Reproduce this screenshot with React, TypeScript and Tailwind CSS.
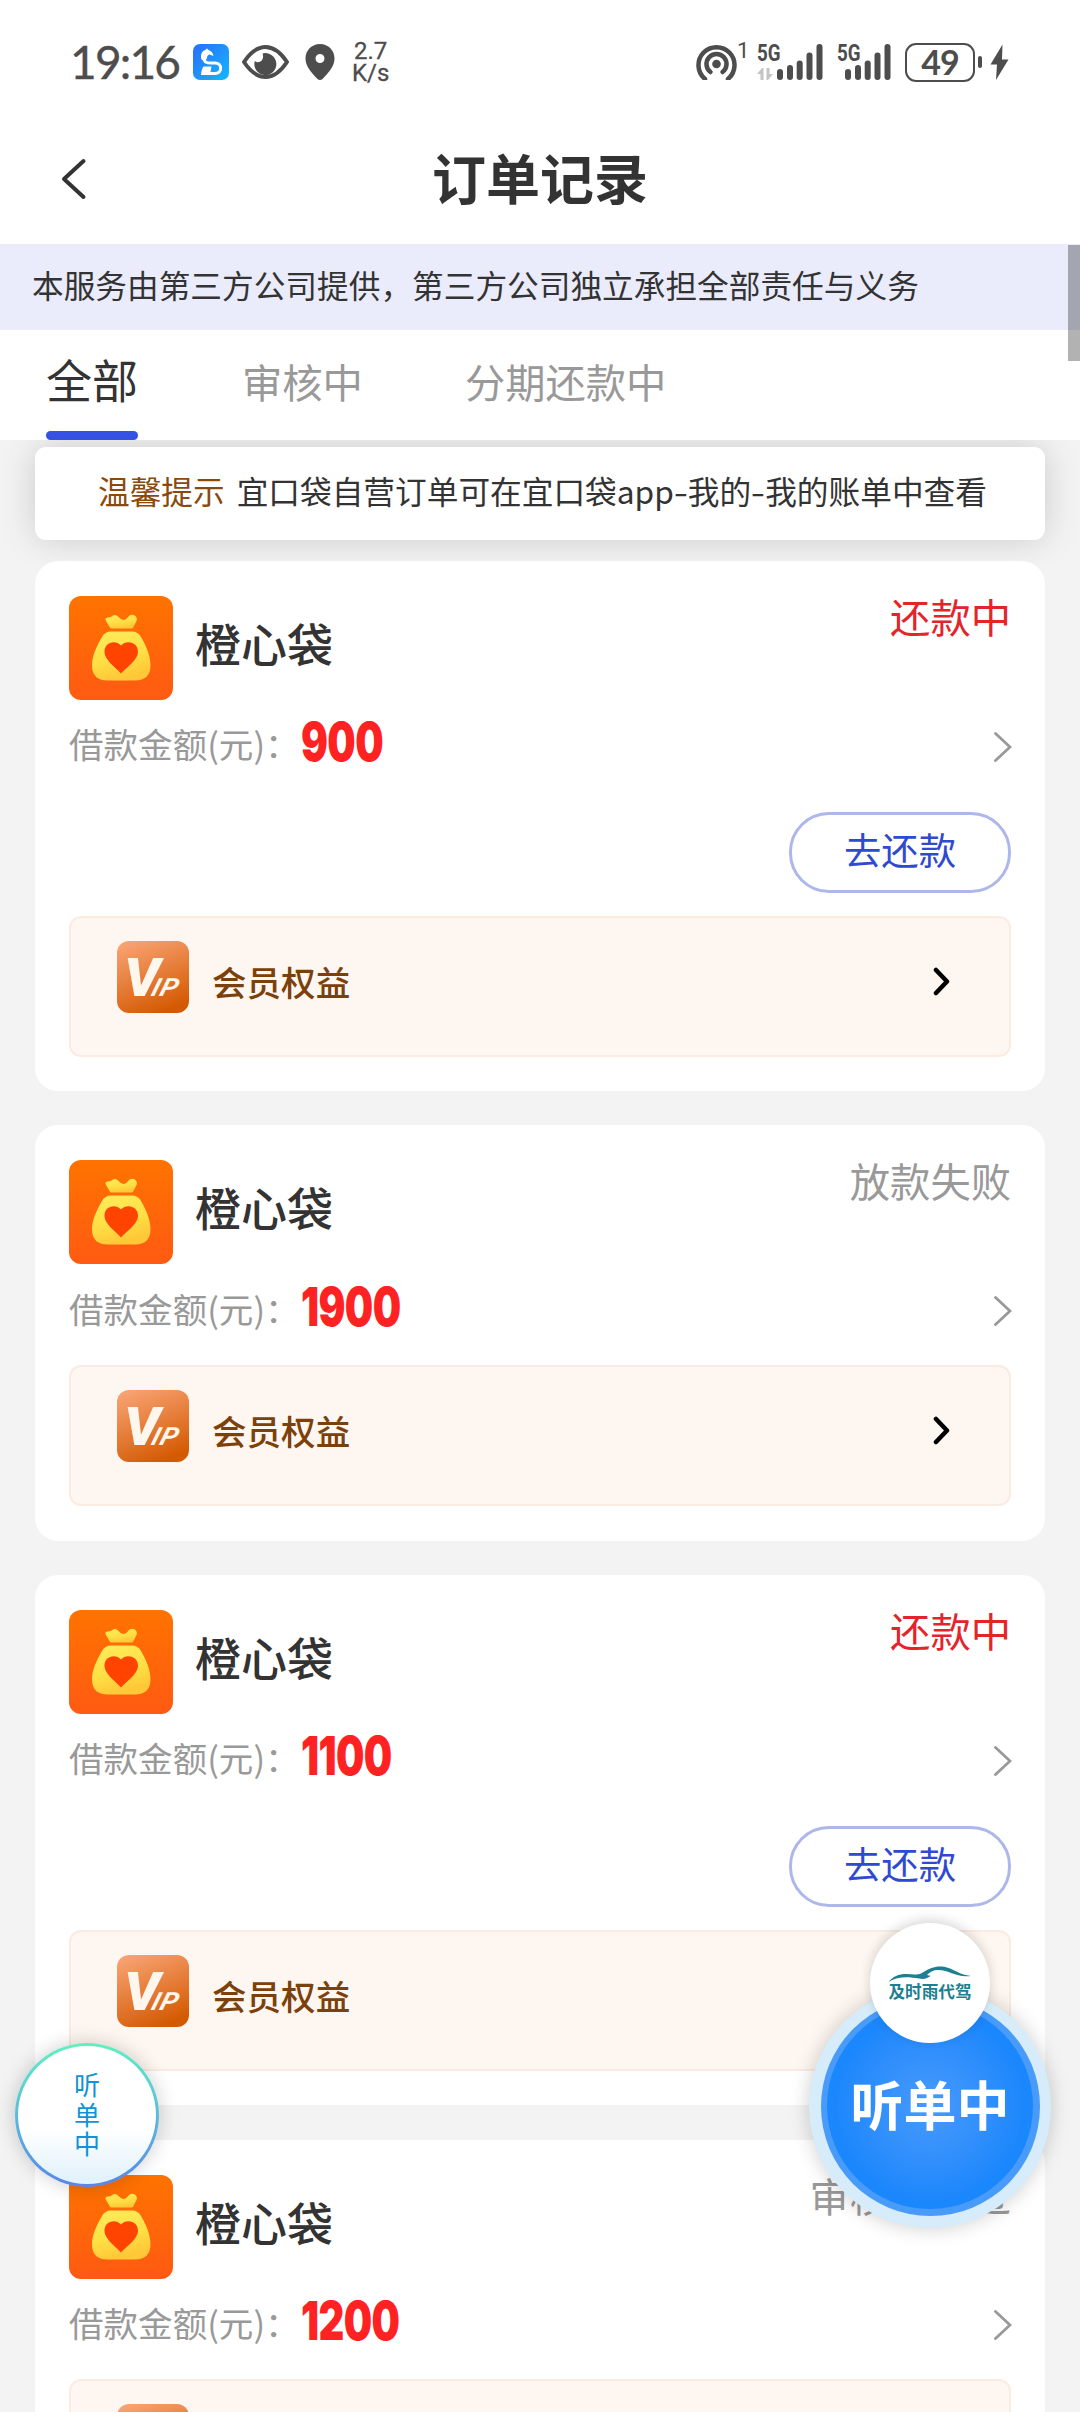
import { FunctionComponent } from "react";

type OrderType = {
  name: string;
  amount: string;
  status: string;
  repaying?: boolean;
};

const orders: OrderType[] = [
  { name: "橙心袋", amount: "900", status: "还款中", repaying: true },
  { name: "橙心袋", amount: "1900", status: "放款失败" },
  { name: "橙心袋", amount: "1100", status: "还款中", repaying: true },
  { name: "橙心袋", amount: "1200", status: "审核未通过" },
];

const Signal = ({ className = "" }: { className?: string }) => (
  <svg className={className} width="46" height="36" viewBox="0 0 46 36" fill="#4d4d4d">
    <rect x="0" y="25" width="6" height="11" rx="3" />
    <rect x="10" y="21" width="6" height="15" rx="3" />
    <rect x="19.7" y="16.5" width="6" height="19.5" rx="3" />
    <rect x="29.5" y="8.5" width="6" height="27.5" rx="3" />
    <rect x="39.5" y="0" width="6" height="36" rx="3" />
  </svg>
);

const StatusBar = () => (
  <div className="h-[124px] shrink-0 flex justify-between pl-[70px] pr-[71px] pt-[42px] text-[#4d4d4d]">
    <div className="flex h-10 items-center">
      <span className="w-[123px] font-['Lato'] text-[46px] leading-10 tracking-[-1.8px] whitespace-nowrap [-webkit-text-stroke:0.4px_#4d4d4d]">19:16</span>
      <svg width="36" height="36" viewBox="0 0 36 36">
        <defs>
          <linearGradient id="app" x1="0" y1="0" x2="1" y2="1">
            <stop offset="0" stopColor="#2a6cff" />
            <stop offset="1" stopColor="#14b8fb" />
          </linearGradient>
        </defs>
        <rect width="36" height="36" rx="7" fill="url(#app)" />
        <path d="M8 13C8 8 10.500 6.500 13 5.500L14 4.500L15.500 6C18.500 7 20 9 20.500 12L16.500 10.500C14.500 11 14 12.500 14 14.500C11 17.500 8 17 8 13Z" fill="#fff" />
        <path d="M11.500 14.500C11 18.500 14 19 18 19H22C29.500 19 29.500 29.500 22 29.500H17" fill="none" stroke="#fff" strokeWidth="3" />
        <path d="M10.500 22.500H18.500L17 31H8Q8.500 25 10.500 22.500Z" fill="#fff" />
      </svg>
      <svg className="ml-[13px]" width="47" height="34" viewBox="0 0 47 34">
        <path d="M2 17C9 6.500 16 2 23.500 2C31 2 38 6.500 45 17C38 27.500 31 32 23.500 32C16 32 9 27.500 2 17Z" fill="none" stroke="#4d4d4d" strokeWidth="4" strokeLinejoin="round" />
        <path d="M20.500 8.500A11 11 0 1 1 12.800 16C17 19.500 23 15 20.500 8.500Z" fill="#4d4d4d" />
      </svg>
      <svg className="ml-4" width="30" height="36" viewBox="0 0 30 36">
        <path fillRule="evenodd" d="M15 0C6.500 0 0.500 6.500 0.500 14.500C0.500 22 6 28 12.500 35Q15 37 17.500 35C24 28 29.500 22 29.500 14.500C29.500 6.500 23.500 0 15 0ZM15 10A4.500 4.500 0 1 1 15 19A4.500 4.500 0 1 1 15 10Z" fill="#4d4d4d" />
      </svg>
      <div className="ml-[17px] flex flex-col items-center font-['Roboto'] text-[24px] leading-[22px] [-webkit-text-stroke:0.3px_#4d4d4d]">
        <span>2.7</span>
        <span>K/s</span>
      </div>
    </div>
    <div className="flex h-10 items-center">
      <svg width="41" height="36" viewBox="0 0 41 36" fill="none" stroke="#4d4d4d" strokeWidth="4.500">
        <path d="M9 35A18 18 0 1 1 32 35" strokeLinecap="round" />
        <path d="M14.500 28A10 10 0 1 1 26.500 28" strokeLinecap="round" />
        <circle cx="20.500" cy="20" r="4.300" fill="#4d4d4d" stroke="none" />
      </svg>
      <span className="w-5 self-start font-['Roboto'] text-[22px] leading-[18px]">1</span>
      <div className="relative flex w-[66px]">
        <span className="absolute left-0 top-0 origin-left scale-x-[0.78] font-['Roboto'] text-[24px] font-bold leading-[18px]">5G</span>
        <svg className="absolute bottom-0 left-0" width="16" height="12" viewBox="0 0 16 12" fill="#c4c4c4">
          <path d="M0 6L5 0H6.500V12H3.500V6ZM9.500 0H12.500V6H16L11 12H9.500Z" />
        </svg>
        <Signal className="ml-5" />
      </div>
      <div className="relative ml-[14px] flex w-[54px]">
        <span className="absolute left-0 top-0 origin-left scale-x-[0.78] font-['Roboto'] text-[24px] font-bold leading-[18px]">5G</span>
        <Signal className="ml-[8px]" />
      </div>
      <div className="ml-[14px] flex h-[39px] w-[70px] items-center justify-center rounded-[11px] border-[2.5px] border-[#4d4d4d] font-['Lato'] text-[34px] font-bold leading-none tracking-[-1px]">
        49
      </div>
      <div className="ml-[3px] h-3 w-1 rounded-full bg-[#4d4d4d]" />
      <svg className="ml-2" width="19" height="36" viewBox="0 0 19 36">
        <path d="M12.500 0.500L0.500 20.500H7L6 36L18.500 15.500H12Z" fill="#4d4d4d" />
      </svg>
    </div>
  </div>
);

const MoneyBag = () => (
  <svg className="size-[104px] shrink-0 rounded-[12px]" viewBox="0 0 104 104">
    <defs>
      <linearGradient id="bagBg" x1="0" y1="0" x2="0" y2="1">
        <stop offset="0" stopColor="#ff7300" />
        <stop offset="1" stopColor="#ff5a12" />
      </linearGradient>
      <linearGradient id="bag" x1="0" y1="0" x2="0.300" y2="1">
        <stop offset="0" stopColor="#ffec5c" />
        <stop offset="0.600" stopColor="#ffe045" />
        <stop offset="1" stopColor="#ffc838" />
      </linearGradient>
    </defs>
    <rect width="104" height="104" fill="url(#bagBg)" />
    <path d="M40.500 31L36.500 24Q36 21.500 39 21.500Q42 21.500 44 19.500Q47 18 49.500 21Q52 24 54.500 24Q57 24 60 20Q63 17.500 66.500 20Q69 23 67 26L64.500 31Q64 32.500 62 32.500H43Q41 32.500 40.500 31Z" fill="url(#bag)" />
    <path d="M42 35.500H63Q69 35.500 72 41C78 51 81.500 61 81.500 69Q81.500 84.500 66 84.500H38.500Q23 84.500 23 69C23 61 27 51 33 41Q36 35.500 42 35.500Z" fill="url(#bag)" />
    <path d="M52 77.500C46 71 36 64 35.500 56.500C35 45.500 47 43.500 52 49.500C57 43.500 69.500 45.500 69 56.500C68.500 64 58 71 52 77.500Z" fill="#ff4300" />
  </svg>
);

const VipBadge = () => (
  <svg className="size-[72px] shrink-0" viewBox="0 0 72 72">
    <defs>
      <linearGradient id="vipBg" x1="0.200" y1="0" x2="0.600" y2="1">
        <stop offset="0" stopColor="#f8a272" />
        <stop offset="1" stopColor="#d45a02" />
      </linearGradient>
    </defs>
    <rect width="72" height="72" rx="12" fill="url(#vipBg)" />
    <g fill="#fff6ee" fontFamily="Roboto" fontStyle="italic">
      <text x="7" y="55" fontWeight="900" fontSize="53" textLength="36" lengthAdjust="spacingAndGlyphs">V</text>
      <g transform="translate(33 55) skewX(-17)" fontWeight="700" fontSize="25">
        <text x="0" y="0" textLength="7.500" lengthAdjust="spacingAndGlyphs">I</text>
        <text x="8.500" y="0" textLength="17" lengthAdjust="spacingAndGlyphs">P</text>
      </g>
    </g>
  </svg>
);

const OrderCard: FunctionComponent<OrderType> = ({ name, amount, status, repaying }) => (
  <div className="relative flex flex-col rounded-[23px] bg-white px-[34px] pt-[35px] pb-[34.4px]">
    <div className="flex">
      <MoneyBag />
      <div className="ml-[22px] flex-1 pt-[23px] text-[46px] font-medium leading-[46px] text-[#333]">{name}</div>
      <div className={`text-[40.300px] leading-[40px] ${repaying ? "text-[#e3242b]" : "text-[#999]"}`}>{status}</div>
    </div>
    <div className="flex h-[77.500px] items-center pt-[9px]">
      <span className="text-[34.560px] leading-[36px] text-[#999]">借款金额(元)：</span>
      <span className="ml-[1px] flex-1 origin-left scale-x-[0.74] pb-[2px] font-['Inter'] text-[54px] font-black leading-[56px] tracking-[-0.8px] text-[#ff2222]">{amount}</span>
      <svg className="mt-[7px] -mr-px" width="18" height="30" viewBox="0 0 18 30">
        <path d="M1.500 1.500L16 15L1.500 28.500" fill="none" stroke="#999" strokeWidth="2.800" strokeLinecap="round" />
      </svg>
    </div>
    {repaying && (
      <button className="mt-[34.500px] h-[80.600px] w-[222px] self-end rounded-[40px] border-3 border-[#adb7e9] pb-[7px] text-[37.400px] leading-[40px] text-[#2f49d1]">
        去还款
      </button>
    )}
    <div className={`${repaying ? "mt-[23px]" : "mt-[23.200px]"} flex h-[141px] rounded-[12px] border-2 border-[#fbebe0] bg-[#fef7f1] pl-[46px] pt-[23px] pr-[58px]`}>
      <VipBadge />
      <span className="ml-[23px] flex-1 pt-[22px] text-[34.560px] font-medium leading-[36px] text-[#7c410b]">会员权益</span>
      <svg className="mt-[26px]" width="18" height="30" viewBox="0 0 18 30">
        <path d="M3 3L14 14.500L3 26" fill="none" stroke="#000" strokeWidth="4.500" strokeLinecap="round" strokeLinejoin="round" />
      </svg>
    </div>
  </div>
);

const App = () => {
  return (
    <div className="relative flex h-[2412px] w-[1080px] flex-col overflow-hidden bg-[#f3f3f3] font-['Noto_Sans_CJK_SC',sans-serif]">
      {/* Header */}
      <div className="bg-white">
        <StatusBar />
        <div className="relative flex h-[120px] items-center justify-center pb-[15px]">
          <svg className="absolute left-[61px] top-[34px]" width="26" height="42" viewBox="0 0 26 42">
            <path d="M22.500 3L3 21L22.500 39" fill="none" stroke="#333" strokeWidth="4" strokeLinecap="round" strokeLinejoin="round" />
          </svg>
          <h1 className="text-[54px] font-bold leading-[54px] text-[#333]">订单记录</h1>
        </div>
      </div>

      <div className="flex h-[86px] shrink-0 items-center bg-[#eaecfc] pb-[6px] pl-[32px] text-[31.680px] leading-[32px] text-[#333]">
        本服务由第三方公司提供，第三方公司独立承担全部责任与义务
      </div>

      {/* Tabs */}
      <div className="relative z-10 flex h-[110px] shrink-0 bg-white pl-[46px]">
        <div className="flex w-[92px] flex-col justify-between pt-[25px]">
          <span className="text-[46px] leading-[46px] text-[#333]">全部</span>
          <div className="h-[9px] rounded-full bg-[#3552e4]" />
        </div>
        <span className="ml-[104px] pt-[30px] text-[40.300px] leading-[42px] text-[#999]">审核中</span>
        <span className="ml-[102px] pt-[30px] text-[40.300px] leading-[42px] text-[#999]">分期还款中</span>
      </div>

      {/* Tip */}
      <div className="mx-[35px] mt-[7px] flex h-[93px] shrink-0 items-center rounded-[11px] bg-white pb-[8px] pl-[63px] text-[31.680px] leading-[32px] text-[#333] shadow-[0_0_36px_rgba(0,0,0,0.16)]">
        <span className="mr-[12px] text-[#8a4a0c]">温馨提示</span>
        <span className="flex whitespace-nowrap">
          宜口袋自营订单可在宜口袋app
          <span className="mx-[1px] origin-center scale-x-[1.3] px-[0.500px]">-</span>
          我的
          <span className="mx-[1px] origin-center scale-x-[1.3] px-[0.500px]">-</span>
          我的账单中查看
        </span>
      </div>

      {/* Orders */}
      <div className="mx-[35px] mt-[21px] flex flex-col gap-[34.500px]">
        {orders.map((order) => (
          <OrderCard key={order.amount} {...order} />
        ))}
      </div>

      {/* Scrollbar */}
      <div className="absolute right-0 top-[245px] z-20 h-[116px] w-3 bg-black/30" />

      {/* Floating bubble on the left */}
      <div className="absolute left-[15px] top-[2043px] z-20 size-[144px] rounded-full bg-linear-to-b from-[#5ff0c0] to-[#5a84ea] p-[3px] shadow-[0_0_20px_rgba(0,0,0,0.2)]">
        <div className="flex size-full flex-col items-center justify-center rounded-full bg-linear-to-b from-white from-60% to-[#dff1fa] pb-[3px] text-[26px] leading-[29.600px] text-[#1292d8]">
          <span>听</span>
          <span>单</span>
          <span>中</span>
        </div>
      </div>

      {/* Floating bubble on the right */}
      <div className="absolute left-[809px] top-[1986px] z-20 flex size-[242px] items-center justify-center rounded-full bg-[#d6ecfa] pb-[2px] shadow-[0_0_20px_rgba(0,0,0,0.2)]">
        <div className="flex size-[219px] items-center justify-center rounded-full bg-[#489bf8]">
          <div className="flex size-[206px] items-center justify-center rounded-full bg-radial from-[#479afb] to-[#1b87fc] to-65% pb-[6px]">
            <span className="whitespace-nowrap text-[53px] font-bold leading-[54px] text-white">听单中</span>
          </div>
        </div>
      </div>
      <div className="absolute left-[870px] top-[1923px] z-20 flex size-[120px] flex-col items-center rounded-full bg-white pt-[43px] shadow-[0_-3px_12px_rgba(0,0,0,0.16)]">
        <svg width="84" height="17" viewBox="0 0 84 17" fill="#1c7f92">
          <path d="M0.500 16C5 10 12 7.500 20 8C26 8.500 29 9 33 7.500C40 3 46 0.500 52 0.500C64 0.500 68 8 83 10C68 12 62 4 50 4C45 4 42 6 39 9Q42 10 43 9.500Q38 14 31 12.500C20 10.500 10 10 0.500 16Z" />
        </svg>
        <span className="text-[16.600px] font-bold leading-[16px] text-[#1c7f92]">及时雨代驾</span>
      </div>
    </div>
  );
};

export default App;
